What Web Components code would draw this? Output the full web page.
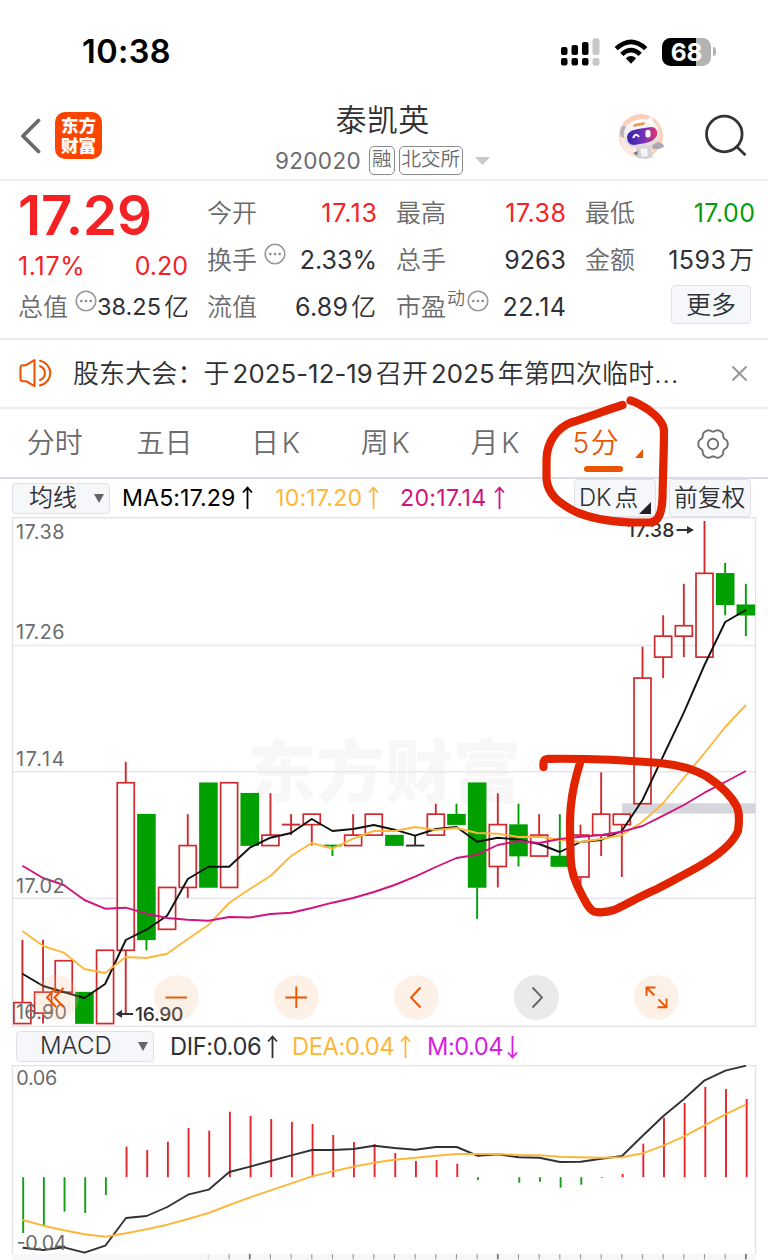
<!DOCTYPE html>
<html lang="zh-CN">
<head>
<meta charset="utf-8">
<title>泰凯英 920020</title>
<style>
body{
    margin: 0;
    width: 768px;
    height: 1260px;
    overflow: hidden;
    background: #fff;
    color: #303134;
    font-family: Inter, "Noto Sans CJK SC", sans-serif;
}
</style>
</head>
<body>
<stock-page></stock-page>

<script>
// small helper, every element gets an open root with its own styles
function define(name, html, setup){
    const template = document.createElement('template');
    template.innerHTML = html;
    customElements.define(name, class extends HTMLElement {
        constructor(){
            super();
            this.attachShadow({mode: 'open'});
            this.shadowRoot.appendChild(template.content.cloneNode(true));
        }
        connectedCallback(){
            if(setup) setup(this, this.shadowRoot);
        }
    });
}

define('status-bar', `
<style>
:host{
    display: flex;
    box-sizing: border-box;
    height: 103px;
    padding: 0 52px 0 82px;
    align-items: center;
    justify-content: space-between;
    color: #000;
}
.time{
    font-size: 32.5px;
    font-weight: 600;
    letter-spacing: 0.4px;
}
.right{
    display: flex;
    align-items: center;
    gap: 14px;
}
svg{ display: block; }
.battery{
    display: flex;
    align-items: center;
    gap: 2px;
}
.cell{
    width: 49px;
    height: 28px;
    border-radius: 8.5px;
    background: linear-gradient(90deg, #000 69%, #b3b3b3 69%);
    color: #fff;
    font-size: 24.5px;
    font-weight: 650;
    line-height: 28px;
    text-align: center;
    letter-spacing: -0.3px;
}
.cap{
    width: 3px;
    height: 9px;
    border-radius: 0 3px 3px 0;
    background: #b3b3b3;
}
</style>
<div class="time">10:38</div>
<div class="right">
    <svg width="39" height="28" viewBox="0 0 39 28">
        <g fill="#000">
            <rect x="0" y="9" width="6.5" height="8" rx="2"/>
            <rect x="10.5" y="7" width="6.5" height="10" rx="2"/>
            <rect x="21" y="4" width="6.5" height="13" rx="2"/>
            <rect x="0" y="20" width="6.5" height="7.5" rx="2"/>
            <rect x="10.5" y="20" width="6.5" height="7.5" rx="2"/>
            <rect x="21" y="20" width="6.5" height="7.5" rx="2"/>
        </g>
        <g fill="#c8c8c8">
            <rect x="31.5" y="0.5" width="7" height="16.5" rx="2"/>
            <rect x="31.5" y="20" width="7" height="7.5" rx="2"/>
        </g>
    </svg>
    <svg width="34" height="28" viewBox="0 0 34 28">
        <g fill="none" stroke="#000" stroke-width="4.6">
            <path d="M2.2 10.6 Q17 -3 31.8 10.6"/>
            <path d="M7.8 16.4 Q17 8 26.2 16.4"/>
        </g>
        <path d="M11.8 20.3 Q17 15.8 22.2 20.3 L17 25.8 Z"/>
    </svg>
    <div class="battery"><div class="cell">68</div><div class="cap"></div></div>
</div>
`);

define('stock-header', `
<style>
:host{
    display: grid;
    grid-template-columns: 150px 1fr 150px;
    box-sizing: border-box;
    height: 78px;
    border-bottom: 2px solid #eeeeef;
}
svg{ display: block; }
.left{
    display: flex;
    align-items: flex-start;
    gap: 14px;
    padding: 9px 0 0 20px;
}
.back{ margin-top: 6px; }
.logo{
    width: 47px;
    height: 47px;
    box-sizing: border-box;
    border-radius: 10px;
    background: #fe4500;
    color: #fff;
    font-size: 17.5px;
    line-height: 19.5px;
    font-weight: 900;
    text-align: center;
    padding-top: 4px;
}
.middle{
    display: flex;
    flex-direction: column;
    align-items: center;
    margin-left: -3px;
}
.name{
    font-size: 31px;
    line-height: 33px;
    letter-spacing: 0.4px;
    font-weight: 350;
}
.sub{
    display: flex;
    align-items: center;
    margin-top: 10px;
    height: 29px;
    color: #6b6b6d;
    font-size: 22.5px;
}
.code{ letter-spacing: 0.35px; margin-right: 8px; }
.tag{
    box-sizing: border-box;
    height: 29px;
    border: 1.5px solid #8a8a8c;
    border-radius: 5px;
    padding: 0 2px;
    margin-right: 4px;
    font-size: 19.5px;
    line-height: 25px;
    font-weight: 350;
}
.tri{ margin-left: 8px; }
.right{
    display: flex;
    align-items: flex-start;
    padding-top: 9px;
    gap: 39px;
}
</style>
<div class="left">
    <svg class="back" width="21" height="36" viewBox="0 0 21 36"><path d="M18.5 2.5 L3 18 L18.5 33.5" fill="none" stroke="#6a6a6a" stroke-width="3.8" stroke-linecap="round" stroke-linejoin="round"/></svg>
    <div class="logo">东方<br>财富</div>
</div>
<div class="middle">
    <div class="name">泰凯英</div>
    <div class="sub">
        <span class="code">920020</span><span class="tag">融</span><span class="tag">北交所</span>
        <svg class="tri" width="15" height="8" viewBox="0 0 15 8"><path d="M0 0H15L7.5 8Z" fill="#c9c9c9"/></svg>
    </div>
</div>
<div class="right">
    <svg width="47" height="48" viewBox="0 0 47 48">
        <defs>
            <linearGradient id="visor" x1="0" x2="1"><stop offset="0" stop-color="#3321a8"/><stop offset=".55" stop-color="#7432bb"/><stop offset="1" stop-color="#e33869"/></linearGradient>
            <linearGradient id="shell" x1="0" y1="0" x2="0" y2="1"><stop offset="0" stop-color="#fff"/><stop offset="1" stop-color="#d9d7dc"/></linearGradient>
        </defs>
        <circle cx="23" cy="24" r="22" fill="#fdd0bb"/>
        <path d="M3 22 Q1 34 10 42 Q23 50 35 40 L31 33 Z" fill="#fbe9e2"/>
        <path d="M18 36 L32 33 L35 45 L28 47 L19 46 Z" fill="#d4d1d5"/>
        <path d="M22 37 L29 36 L30 44 L24 45 Z" fill="#f6f5f6"/>
        <path d="M34 33 L40 30 L45 32 L46 35 L41 37 L35 37 Z" fill="#aaa8b0"/>
        <path d="M15 41 L20 39 L19 44 Z" fill="#7d7a83"/>
        <ellipse cx="6" cy="20" rx="4" ry="6" fill="#b5b3bb"/>
        <path d="M6 26 Q4 11 21 7.5 Q38 6 41 19 Q42 31 31 34.5 Q9 40 6 26 Z" fill="url(#shell)"/>
        <path d="M30 7 Q35 1 35 12 Z" fill="#fff"/>
        <path d="M16 12 L27 10 L26 13 L15 15 Z" fill="#e89b52"/>
        <path d="M9 25 Q9 19 20 17 L33 15 Q40 15 39 23 Q38 28 28 31 L16 33 Q9.5 33 9 25 Z" fill="url(#visor)"/>
        <path d="M15 26 Q18 20 21 25" fill="none" stroke="#fff" stroke-width="2"/>
        <rect x="27.5" y="18" width="5" height="7.5" rx="2" fill="#fff"/>
    </svg>
    <svg width="43" height="44" viewBox="0 0 43 44"><g fill="none" stroke="#333" stroke-width="2.8"><circle cx="20.3" cy="22" r="17.8"/><path d="M32.5 34.5 L41.5 43.2"/></g></svg>
</div>
`);

define('more-dots', `
<style>
:host{ display: block; width: 22px; height: 22px; }
svg{ display: block; }
</style>
<svg width="22" height="22" viewBox="0 0 22 22"><circle cx="11" cy="11" r="9.8" fill="none" stroke="#999" stroke-width="1.6"/><g fill="#888"><circle cx="6.3" cy="11" r="1.3"/><circle cx="11" cy="11" r="1.3"/><circle cx="15.7" cy="11" r="1.3"/></g></svg>
`);

// label on the left, value on the right
// unit, color, size and spacing are optional
define('quote-item', `
<style>
:host{
    display: flex;
    align-items: center;
    justify-content: space-between;
    height: 47px;
    font-size: 25px;
    white-space: nowrap;
}
.label{
    display: flex;
    align-items: center;
    color: #6b6b6d;
    font-weight: 350;
    margin: -4px 0 0 -1px;
}
.value{
    display: flex;
    align-items: center;
}
.unit{ font-weight: 350; margin: -4px 1px 0 3px; }
</style>
<div class="label"><slot></slot></div>
<div class="value"><span class="num"></span><span class="unit"></span></div>
`, (el, root) => {
    const num = root.querySelector('.num');
    const unit = root.querySelector('.unit');
    num.textContent = el.getAttribute('value');
    if(el.hasAttribute('unit')) unit.textContent = el.getAttribute('unit');
    else unit.remove();
    if(el.hasAttribute('color')) num.style.color = el.getAttribute('color');
    if(el.hasAttribute('size')) num.style.fontSize = el.getAttribute('size');
    if(el.hasAttribute('spacing')){
        num.style.letterSpacing = el.getAttribute('spacing');
        num.style.marginRight = '-' + el.getAttribute('spacing');
    }
});

define('quote-panel', `
<style>
:host{
    display: grid;
    grid-template-columns: repeat(4, 169px);
    column-gap: 20px;
    box-sizing: border-box;
    height: 159px;
    padding: 8px 13px 0 19px;
    border-bottom: 2px solid #ebebec;
}
.price{
    height: 53px;
    line-height: 53px;
    margin-left: -1px;
    font-size: 54.5px;
    font-weight: 600;
    color: #f52225;
    white-space: nowrap;
}
.change{
    display: flex;
    justify-content: space-between;
    height: 41px;
    line-height: 49px;
    font-size: 25px;
    color: #f52225;
}
.percent{ letter-spacing: 0.7px; margin-left: -1px; }
more-dots{ margin: -7px 0 0 7px; }
sup{
    font-size: 18px;
    line-height: 18px;
    margin-top: -12px;
    margin-left: 1px;
}
sup + more-dots{ margin-left: 2px; }
button{
    display: block;
    box-sizing: border-box;
    width: 80px;
    height: 39px;
    margin: 2px 0 0 85px;
    padding: 0;
    border: 1.5px solid #dfe1e8;
    border-radius: 4px;
    background: #f6f7fa;
    color: #303134;
    font: 350 25px/34px Inter, "Noto Sans CJK SC", sans-serif;
}
</style>
<div>
    <div class="price">17.29</div>
    <div class="change"><span class="percent">1.17%</span><span>0.20</span></div>
    <quote-item value="38.25" unit="亿" size="23.5px">总值<more-dots></more-dots></quote-item>
</div>
<div>
    <quote-item value="17.13" color="#f52225" spacing="1px">今开</quote-item>
    <quote-item value="2.33%">换手<more-dots></more-dots></quote-item>
    <quote-item value="6.89" unit="亿" spacing="0.2px">流值</quote-item>
</div>
<div>
    <quote-item value="17.38" color="#f52225" spacing="0.5px">最高</quote-item>
    <quote-item value="9263">总手</quote-item>
    <quote-item value="22.14" spacing="0.4px">市盈<sup>动</sup><more-dots></more-dots></quote-item>
</div>
<div>
    <quote-item value="17.00" color="#0a9b0a" spacing="0.5px">最低</quote-item>
    <quote-item value="1593" unit="万" spacing="0.5px">金额</quote-item>
    <button>更多</button>
</div>
`);

define('notice-bar', `
<style>
:host{
    display: flex;
    align-items: center;
    box-sizing: border-box;
    height: 69px;
    padding: 0 20px 0 19px;
    border-bottom: 2px solid #eeeeef;
    font-size: 26px;
}
svg{ display: block; }
.text{
    flex: 1;
    margin: -4px 0 0 19px;
    white-space: nowrap;
    font-weight: 350;
    letter-spacing: 0.1px;
}
i{ font-style: normal; font-weight: 400; margin: 0 3px; font-size: 25.7px; }
</style>
<svg width="35" height="30" viewBox="0 0 35 30"><g fill="none" stroke="#ea5504" stroke-width="2.1" stroke-linecap="round" stroke-linejoin="round"><path d="M15.5 1.2 V27.2 L7 22.2 H4 Q1.5 22.2 1.5 19.7 V8.7 Q1.5 6.2 4 6.2 H7 Z"/><path d="M21 7.2 A7.3 7.3 0 0 1 21 21"/><path d="M21 1.8 A12.5 12.5 0 0 1 21 26.4"/></g></svg>
<div class="text">股东大会：于<i>2025-12-19</i>召开<i>2025</i>年第四次临时<span style="letter-spacing:1px">...</span></div>
<svg width="17" height="17" viewBox="0 0 17 17"><path d="M1.5 1.5 L15.5 15.5 M15.5 1.5 L1.5 15.5" stroke="#999" stroke-width="2"/></svg>
`);

define('period-tabs', `
<style>
:host{
    display: grid;
    grid-template-columns: repeat(7, 1fr);
    box-sizing: border-box;
    height: 70px;
    border-bottom: 2px solid #dcdce4;
    color: #6b6b6d;
    font-size: 28px;
    font-weight: 350;
    line-height: 69px;
    text-align: center;
}
.k{ letter-spacing: 2.6px; padding-left: 5px; }
.active{
    display: flex;
    flex-direction: column;
    align-items: center;
    color: #ea5504;
}
.active div{
    display: flex;
    align-items: flex-start;
    letter-spacing: 1.5px;
    height: 57px;
    padding-left: 9px;
}
.active svg{ margin: 40px 0 0 15px; }
.bar{
    width: 39px;
    height: 6px;
    border-radius: 3px;
    background: #ea5504;
}
.gear{ display: flex; align-items: center; justify-content: center; }
</style>
<div>分时</div><div>五日</div><div class="k">日K</div><div class="k">周K</div><div class="k">月K</div>
<div class="active">
    <div>5分<svg width="8" height="9" viewBox="0 0 8 9"><path d="M8 0V9H0Z" fill="#ea5504"/></svg></div>
    <span class="bar"></span>
</div>
<div class="gear"><svg width="34" height="34" viewBox="-17 -17 34 34"><g fill="none" stroke="#6f6f6f" stroke-width="1.9"><path class="teeth"/><circle r="5.2"/></g></svg></div>
`, (el, root) => {
    // six rounded teeth
    let d = '';
    for(let a = 0; a < 360; a += 5){
        const t = a * Math.PI / 180;
        const r = 13.8 + 1.2 * Math.cos(6 * t) - 0.3 * Math.cos(12 * t);
        d += (a ? 'L' : 'M') + (r * Math.cos(t)).toFixed(2) + ' ' + (r * Math.sin(t)).toFixed(2);
    }
    root.querySelector('.teeth').setAttribute('d', d + 'Z');
});

define('index-select', `
<style>
:host{
    display: flex;
    align-items: center;
    justify-content: space-between;
    box-sizing: border-box;
    height: 31px;
    border: 1.5px solid #e0e1e8;
    border-radius: 4px;
    background: #f6f7fa;
    font-size: 24px;
    font-weight: 350;
    line-height: 24px;
    padding: 0 5px 0 16px;
}
span{ margin-top: -2px; }
</style>
<span><slot></slot></span><svg width="10" height="9" viewBox="0 0 10 9"><path d="M0 0H10L5 9Z" fill="#666"/></svg>
`);

define('index-value', `
<style>
:host{
    display: flex;
    align-items: center;
    justify-content: space-between;
    white-space: nowrap;
}
</style>
<slot></slot><svg width="11" height="24" viewBox="0 0 11 24"><path d="M5.5 23V1.5M1 6.5L5.5 1.5L10 6.5" fill="none" stroke="currentColor" stroke-width="1.8"/></svg>
`, (el, root) => {
    if(el.hasAttribute('down')) root.querySelector('svg').style.transform = 'rotate(180deg)';
});

define('ma-bar', `
<style>
:host{
    display: flex;
    box-sizing: border-box;
    height: 38px;
    padding-left: 12px;
    font-size: 23.2px;
}
index-select{ width: 98px; margin-top: 4px; }
index-value{ height: 38px; }
.a{ width: 131px; margin-left: 12px; color: #000; letter-spacing: 0.1px; }
.b{ width: 104px; margin-left: 22px; color: #fdb73c; letter-spacing: 0.2px; }
.c{ width: 105px; margin-left: 21px; color: #d0147f; letter-spacing: 0.3px; }
.btn{
    display: flex;
    align-items: center;
    box-sizing: border-box;
    height: 38px;
    width: 82px;
    border: 1.5px solid #e0e1e8;
    border-radius: 4px;
    background: #f6f7fa;
    font-size: 23.8px;
    font-weight: 350;
    line-height: 24px;
    padding-left: 4px;
    white-space: nowrap;
}
.dk{ margin: 0 13px 0 69px; gap: 3px; }
.dk svg{ margin: 19px 0 0 -2px; flex: none; }
</style>
<index-select>均线</index-select>
<index-value class="a">MA5:17.29</index-value>
<index-value class="b">10:17.20</index-value>
<index-value class="c">20:17.14</index-value>
<div class="btn dk"><span>DK</span><span>点</span><svg width="12" height="12" viewBox="0 0 12 12"><path d="M12 0V12H0Z" fill="#222"/></svg></div>
<div class="btn">前复权</div>
`);

define('macd-bar', `
<style>
:host{
    display: flex;
    align-items: center;
    box-sizing: border-box;
    height: 38px;
    padding: 1px 0 0 16px;
    font-size: 23.7px;
}
index-select{ width: 138px; padding-left: 23px; }
.a{ width: 108px; margin-left: 16px; letter-spacing: -0.4px; }
.b{ width: 119px; margin-left: 14px; color: #fdb73c; letter-spacing: -0.4px; }
.c{ width: 91px; margin-left: 16px; color: #d81fe0; letter-spacing: -0.5px; }
</style>
<index-select>MACD</index-select>
<index-value class="a">DIF:0.06</index-value>
<index-value class="b">DEA:0.04</index-value>
<index-value class="c" down>M:0.04</index-value>
`);

const STEP = 20.67;
const line = (ys, x0, color) => `<polyline fill="none" stroke="${color}" stroke-width="1.9" stroke-linejoin="round" points="${ys.map((y, i) => (x0 + i * STEP).toFixed(1) + ',' + y).join(' ')}"/>`;

// open, close, high, low in cents above 16.00
const candles = [
    [90,92,98,90],[91,93,98,90],[93,96,96,93],[93,90,93,90],[90,97,97,90],[97,113,115,91],
    [110,98,110,97],[99,103,103,99],[103,107,110,102],[113,103,113,103],[103,113,113,103],[112,107,112,107],
    [107,108,112,107],[109,109,110,108],[109,110,110,107],[107,107,107,106,'g'],[107,108,110,107],[108,110,110,108],
    [108,107,108,107],[107,107,108,107,'k'],[108,110,111,108],[110,109,111,109],[113,103,113,100],[105,109,112,103],
    [109,106,111,105],[106,108,110,106],[106,105,110,105],[104,108,109,103],[108,110,114,106],[109,110,110,104],
    [111,123,126,111],[125,127,129,123],[127,128,132,125],[125,133,138,125],[133,130,134,129],[130,129,132,127]
];
const ma5 = [973.7,986,992,998,984,940,929.7,915.7,879,866.7,866.7,847.7,837.7,833,819,831,829,825,829.7,835.7,829,827,841.7,837.7,839.7,844,852,842,840,831,800,756,712.7,665,622,610];
const ma10 = [931,946,952.7,969,973,957,958,953.7,939,925,903,889,876,856,843,848.7,838.7,831,831,827,830,828,833,833.7,837,836.7,839.7,842,839,835,821.7,803,778,753,727,705];
const ma20 = [865.7,878,885,900,908.7,907.7,913.7,918,919.7,920.7,917,917.5,914,912.7,908,902.7,898,892,885,876.7,867,858,854.7,845,841,843,839,836.7,835,831.7,826,815.7,805,792.7,782,771];

function drawCandle(c, i){
    const x = 22.4 + i * STEP;
    const y = p => 521 + (138 - p) * 10.47;
    const [o, cl, h, l, flag] = c;
    const top = y(Math.max(o, cl)), bottom = y(Math.min(o, cl));
    const color = flag == 'k' ? '#303134' : (flag == 'g' || cl < o) ? '#00a000' : '#cf2a2e';
    let s = '';
    if(y(h) < top) s += `<path d="M${x} ${y(h)}V${top}" stroke="${color}" stroke-width="1.9"/>`;
    if(y(l) > bottom) s += `<path d="M${x} ${bottom}V${y(l)}" stroke="${color}" stroke-width="1.9"/>`;
    if(o == cl) s += `<path d="M${x - 9.2} ${top}H${x + 9.2}" stroke="${color}" stroke-width="1.9"/>`;
    else if(cl > o) s += `<rect x="${x - 8.5}" y="${top}" width="17" height="${bottom - top}" fill="#fff" stroke="${color}" stroke-width="1.7"/>`;
    else s += `<rect x="${x - 9.3}" y="${top - 0.3}" width="18.6" height="${bottom - top + 0.6}" fill="${color}"/>`;
    return s;
}

define('chart-tools', `
<style>
:host{ display: flex; gap: 75px; }
svg{ display: block; width: 45px; height: 45px; flex: none; margin-right: 0.1px; }
circle{ fill: #f5bd92; fill-opacity: 0.22; }
.off{ fill: #c4c4c4; fill-opacity: 0.35; }
path{ fill: none; stroke: #ea5504; stroke-width: 1.9; }
.grey{ stroke: #666; }
</style>
<svg viewBox="0 0 45 45"><circle cx="22.5" cy="22.5" r="22.5"/><path d="M22 13L13 22.5L22 32M29.5 13L20.5 22.5L29.5 32"/></svg>
<svg viewBox="0 0 45 45"><circle cx="22.5" cy="22.5" r="22.5"/><path d="M11.5 22.5H33"/></svg>
<svg viewBox="0 0 45 45"><circle cx="22.5" cy="22.5" r="22.5"/><path d="M11.5 22.5H33M22.3 11.5V33"/></svg>
<svg viewBox="0 0 45 45"><circle cx="22.5" cy="22.5" r="22.5"/><path d="M26.5 12.5L17 22.5L26.5 32.5"/></svg>
<svg viewBox="0 0 45 45"><circle class="off" cx="22.5" cy="22.5" r="22.5"/><path class="grey" d="M18.5 12.5L28 22.5L18.5 32.5"/></svg>
<svg viewBox="0 0 45 45"><circle cx="22.5" cy="22.5" r="22.5"/><path d="M12.5 21V12.5H21.5M12.5 12.5L20.5 20.5M32.5 23.5V32.3H23.5M32.5 32.3L24.5 24.3"/></svg>
`);

define('kline-chart', `
<style>
:host{ display: block; position: relative; height: 510px; }
svg{ display: block; }
text{ font-family: Inter, sans-serif; }
.axis{ font-size: 19.8px; fill: #6b6b6d; }
.note{ font-size: 19.3px; font-weight: 500; fill: #303134; }
.mark{ font: 900 68px "Noto Sans CJK SC", sans-serif; fill: #f7f7f7; }
chart-tools{ position: absolute; left: 33.5px; top: 458px; }
</style>
<svg width="768" height="510" viewBox="0 517 768 510"></svg>
<chart-tools></chart-tools>
`, (el, root) => {
    const labels = [['17.38',539],['17.26',639],['17.14',765.5],['17.02',892.7],['16.90',1019]];
    root.querySelector('svg').innerHTML = `
        <text class="mark" x="248" y="797" textLength="273">东方财富</text>
        <path d="M12.5 645.5H755.5M12.5 771.7H755.5M12.5 898.3H755.5" stroke="#e7e7f1" stroke-width="1.6"/>
        <rect x="12.5" y="517.8" width="743" height="508.4" fill="none" stroke="#e3e3e6" stroke-width="1.4"/>
        <rect x="622" y="803.3" width="133.5" height="10.3" fill="#d5d6dc"/>
        ${candles.map(drawCandle).join('')}
        ${line(ma5, 22.4, '#111')}${line(ma10, 22.4, '#fdb73c')}${line(ma20, 22.4, '#d0147f')}
        ${labels.map(l => `<text class="axis" x="16" y="${l[1]}" textLength="${l[0] == '16.90' ? 51 : 48.5}">${l[0]}</text>`).join('')}
        <text class="note" x="627" y="537" textLength="47.5">17.38</text>
        <text class="note" x="135" y="1021.3" textLength="48.5">16.90</text>
        <path d="M676.5 530H688M133 1014H121" stroke="#303134" stroke-width="1.9"/>
        <path d="M687 526L694 530L687 534ZM122 1010L115.5 1014L122 1018Z" fill="#303134"/>`;
});

const bars = [1233,1225.7,1211.7,1213,1195,1146.7,1150,1141.7,1128,1130.7,1111.7,1116,1119,1122,1124,1135,1142,1144,1153,1161,1160,1163.7,1180,1177,1182.7,1181.7,1187.7,1184.7,1178,1174,1143.7,1117.7,1103,1087,1089,1099];
const dif = [1247.7,1250,1247.3,1252.7,1245.7,1218,1216,1207,1194.7,1189.7,1172,1166.7,1161,1155.3,1150,1150,1149,1145.7,1148,1149.7,1147,1147,1155.7,1154.3,1157.3,1157.7,1162,1161.7,1158.7,1156,1135.7,1116,1099,1080.3,1070.7,1065.7];
const dea = [1220,1225.7,1230.3,1234.3,1236.7,1233.3,1229.3,1224.7,1219,1213,1205,1197.3,1190.3,1183.3,1176.3,1171.3,1166.7,1162.7,1159.7,1157.7,1155.7,1154,1154,1154,1155,1155.3,1156.7,1157.3,1157.7,1157.3,1153.3,1145.7,1136.3,1125.3,1114.3,1104.3];

define('macd-chart', `
<style>
:host{ display: block; height: 195px; }
svg{ display: block; }
text{ font: 19.8px Inter, sans-serif; fill: #6b6b6d; }
</style>
<svg width="768" height="195" viewBox="0 1065 768 195"></svg>
`, (el, root) => {
    let ticks = '';
    for(let i = 9; i < 36; i++){
        const big = i % 12 == 11;
        ticks += `<path d="M${22.4 + i * STEP} 1254V1259.3" stroke="${i == 9 ? '#ddd' : big ? '#777' : '#999'}" stroke-width="${big ? 1.8 : 1.1}"/>`;
    }
    root.querySelector('svg').innerHTML = `
        <rect x="12" y="1254" width="744" height="6" fill="#f7f7fa"/>
        <path d="M12.5 1254V1065.6H755.5V1254" fill="none" stroke="#e3e3e6" stroke-width="1.4"/>
        ${bars.map((y, i) => y == 1177 ? '' : `<path d="M${23.2 + i * STEP} 1177.2V${y}" stroke="${y < 1177 ? '#e8232a' : '#12a012'}" stroke-width="1.9"/>`).join('')}
        ${line(dif, 22.6, '#303134')}${line(dea, 22.6, '#fdb73c')}
        ${ticks}
        <text x="16.3" y="1085" textLength="41">0.06</text>
        <text x="16.5" y="1250" textLength="50">-0.04</text>`;
});

// hand drawn marks over the whole page
define('ink-layer', `
<style>
:host{ display: block; position: absolute; left: 0; top: 0; pointer-events: none; }
svg{ display: block; }
path{ fill: none; stroke: #e12300; stroke-width: 8.2; stroke-linecap: round; stroke-linejoin: round; }
</style>
<svg width="768" height="1260" viewBox="0 0 768 1260">
    <path d="M622.5 405 C604 411 588 417 571 422.5 C557 428 547 442 546.5 459 L546.5 479 C548 495 559 503 575 511.5 C592 519 612 522 632 522.5 L650 522.5 C658 522 662 513 662.5 498 C663 470 664 450 664 431 C664 424 657 416 648 409.5 C641 405 636 402 630.5 400.5"/>
    <path d="M543.5 767 C543 761 544 758.8 549 758.8 C580 758.5 620 759.5 660 763 C678 765 694 769 706 776 C720 785 732 797 737 807 C740 814 739 824 738 831 C732 845 714 858 697 867.5 C682 876 670 882 657 889 C640 896 622 907 614 910 C606 912.5 598 912.5 594 911.5 C588 909 584 899 577 885 C571 872 570.5 862 570.5 850 C569 815 570 795 580 763" stroke-width="7.6"/>
</svg>
`);

define('stock-page', `
<style>
:host{
    display: flex;
    flex-direction: column;
    position: relative;
    width: 768px;
    height: 1260px;
}
:host > *{ flex: none; }
</style>
<status-bar></status-bar>
<stock-header></stock-header>
<quote-panel></quote-panel>
<notice-bar></notice-bar>
<period-tabs></period-tabs>
<ma-bar></ma-bar>
<kline-chart></kline-chart>
<macd-bar></macd-bar>
<macd-chart></macd-chart>
<ink-layer></ink-layer>
`);
</script>
</body>
</html>
